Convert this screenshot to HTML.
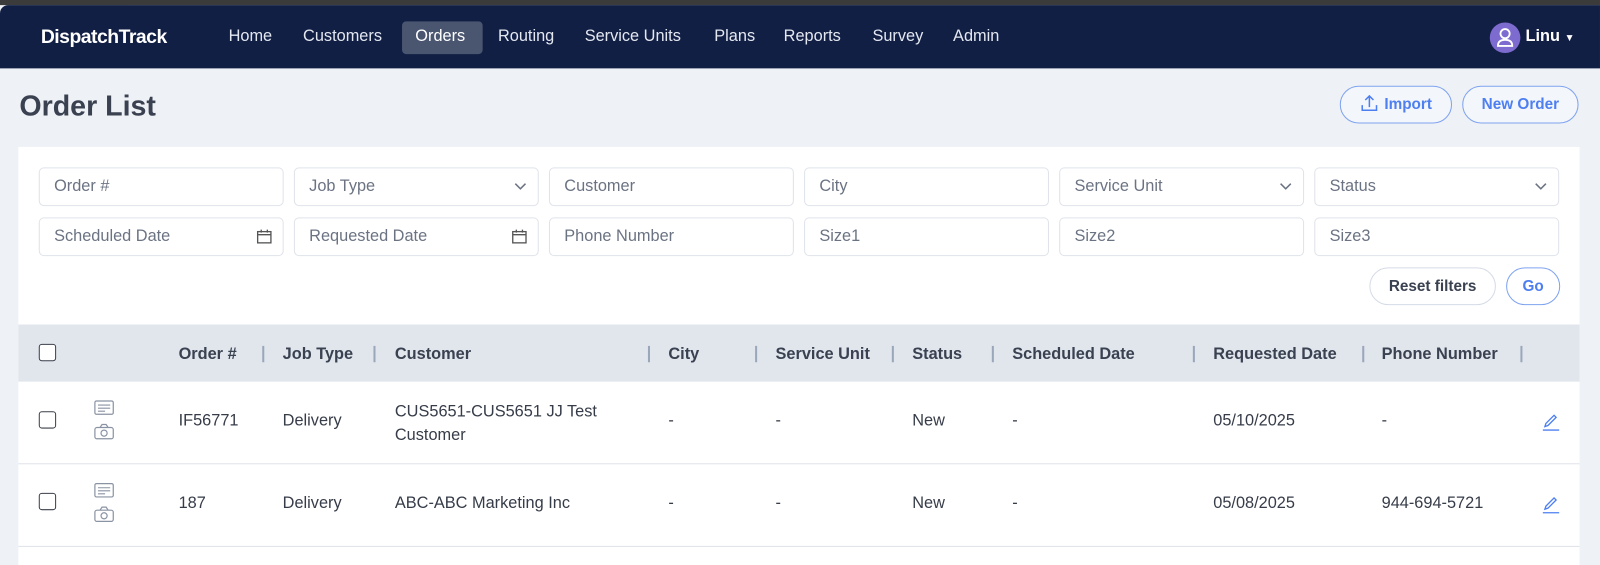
<!DOCTYPE html>
<html><head><style>
*{box-sizing:border-box;margin:0;padding:0}
html,body{width:1600px;height:548px;overflow:hidden;background:#eef1f5}
#w{position:absolute;left:0;top:0;width:1568px;height:537px;transform:scale(1.0204);transform-origin:0 0;font-family:"Liberation Sans",sans-serif;color:#2f3542}
.top{position:absolute;left:0;top:0;width:1568px;height:5px;background:#3b3b3b}
.nav{position:absolute;left:0;top:5px;width:1568px;height:62px;background:#121f45;border-top-left-radius:8px}
.logo{position:absolute;left:40px;top:21px;color:#fff;font-weight:bold;font-size:19px;letter-spacing:-0.5px}
.nl{position:absolute;top:22px;color:#e3e7f0;font-size:16px}
.act{position:absolute;left:394px;top:16px;width:79px;height:32px;background:#4a5570;border-radius:4px}
.av{position:absolute;left:1460px;top:17px;width:30px;height:30px;border-radius:50%;background:#7e6bd0}
h1{position:absolute;left:19px;top:88px;font-size:28px;font-weight:bold;color:#3a4150}
.btn{position:absolute;border:1px solid #7fa3f0;border-radius:19px;color:#4d7ff0;font-weight:bold;font-size:15px;text-align:center;background:#f3f6fb}
.card{position:absolute;left:18px;top:144px;width:1530px;height:410px;background:#fff}
.in{position:absolute;height:38px;width:240px;border:1px solid #dfe3ea;border-radius:5px;color:#6b7383;font-size:16px;padding:9px 14px;background:#fff}
.in svg{position:absolute;right:10px;top:10px}
.th{position:absolute;left:18px;top:318px;width:1530px;height:56px;background:#e1e6ed}
.h{position:absolute;top:339px;font-weight:bold;font-size:16px;color:#3a4150}
.sep{position:absolute;top:339px;width:2px;height:16px;background:#9aa6ba}
.cb{position:absolute;left:38px;width:17px;height:17px;border:1.5px solid #3a3f4a;border-radius:3px;background:#fff}
.c{position:absolute;font-size:16px;color:#363c48}
.rl{position:absolute;left:18px;width:1530px;height:1px;background:#dfe3ea}
</style></head><body><div id="w">
<div class="top"></div>
<div class="nav">
<div class="logo">DispatchTrack</div>
<div class="act"></div>
<div class="nl" style="left:224px">Home</div>
<div class="nl" style="left:297px">Customers</div>
<div class="nl" style="left:407px;color:#fff">Orders</div>
<div class="nl" style="left:488px">Routing</div>
<div class="nl" style="left:573px">Service Units</div>
<div class="nl" style="left:700px">Plans</div>
<div class="nl" style="left:768px">Reports</div>
<div class="nl" style="left:855px">Survey</div>
<div class="nl" style="left:934px">Admin</div>
<div class="av"><svg width="30" height="30"><circle cx="15" cy="11" r="4.5" fill="none" stroke="#fff" stroke-width="1.8"/><path d="M8 23 q0-6 7-6 q7 0 7 6 z" fill="none" stroke="#fff" stroke-width="1.8"/></svg></div>
<div class="nl" style="left:1495px;color:#fff;font-weight:bold">Linu <span style="font-size:10px">▼</span></div>
</div>
<h1>Order List</h1>
<div class="btn" style="left:1313px;top:84px;width:110px;height:37px;line-height:35px"><svg width="18" height="18" style="vertical-align:-3px;margin-right:6px"><path d="M9 13V2M5 6l4-4 4 4M2 11v5h14v-5" fill="none" stroke="#4d7ff0" stroke-width="1.5"/></svg>Import</div>
<div class="btn" style="left:1433px;top:84px;width:114px;height:37px;line-height:35px">New Order</div>
<div class="card"></div>
<div class="in" style="left:38px;top:164px">Order #</div>
<div class="in" style="left:288px;top:164px">Job Type<svg width="14" height="14"><path d="M2 5l5 5 5-5" fill="none" stroke="#6b7383" stroke-width="1.5"/></svg></div>
<div class="in" style="left:538px;top:164px">Customer</div>
<div class="in" style="left:788px;top:164px">City</div>
<div class="in" style="left:1038px;top:164px">Service Unit<svg width="14" height="14"><path d="M2 5l5 5 5-5" fill="none" stroke="#6b7383" stroke-width="1.5"/></svg></div>
<div class="in" style="left:1288px;top:164px">Status<svg width="14" height="14"><path d="M2 5l5 5 5-5" fill="none" stroke="#6b7383" stroke-width="1.5"/></svg></div>
<div class="in" style="left:38px;top:213px">Scheduled Date<svg width="16" height="16"><rect x="1.5" y="3" width="13" height="11" fill="none" stroke="#555" stroke-width="1.3"/><path d="M1.5 6h13M5 1v3M11 1v3" stroke="#555" stroke-width="1.3"/></svg></div>
<div class="in" style="left:288px;top:213px">Requested Date<svg width="16" height="16"><rect x="1.5" y="3" width="13" height="11" fill="none" stroke="#555" stroke-width="1.3"/><path d="M1.5 6h13M5 1v3M11 1v3" stroke="#555" stroke-width="1.3"/></svg></div>
<div class="in" style="left:538px;top:213px">Phone Number</div>
<div class="in" style="left:788px;top:213px">Size1</div>
<div class="in" style="left:1038px;top:213px">Size2</div>
<div class="in" style="left:1288px;top:213px">Size3</div>
<div class="btn" style="left:1342px;top:262px;width:124px;height:37px;line-height:35px;color:#3a4150;border-color:#d5dbe6;background:#fff">Reset filters</div>
<div class="btn" style="left:1476px;top:262px;width:53px;height:37px;line-height:35px;background:#fff">Go</div>
<div class="th"></div>
<div class="cb" style="top:337px"></div>
<div class="h" style="left:175px">Order #</div><div class="sep" style="left:257px"></div>
<div class="h" style="left:277px">Job Type</div><div class="sep" style="left:366px"></div>
<div class="h" style="left:387px">Customer</div><div class="sep" style="left:635px"></div>
<div class="h" style="left:655px">City</div><div class="sep" style="left:740px"></div>
<div class="h" style="left:760px">Service Unit</div><div class="sep" style="left:874px"></div>
<div class="h" style="left:894px">Status</div><div class="sep" style="left:972px"></div>
<div class="h" style="left:992px">Scheduled Date</div><div class="sep" style="left:1169px"></div>
<div class="h" style="left:1189px">Requested Date</div><div class="sep" style="left:1335px"></div>
<div class="h" style="left:1354px">Phone Number</div><div class="sep" style="left:1490px"></div>

<div class="cb" style="top:403px"></div>
<svg style="position:absolute;left:92px;top:392px" width="20" height="40"><rect x="1" y="1" width="18" height="13" rx="1.5" fill="none" stroke="#8a93a3" stroke-width="1.2"/><path d="M4 5h12M4 8h12M4 11h7" stroke="#8a93a3" stroke-width="1.1"/><rect x="1" y="27" width="18" height="11" rx="2" fill="none" stroke="#8a93a3" stroke-width="1.2"/><path d="M6 27l2-3h4l2 3" fill="none" stroke="#8a93a3" stroke-width="1.2"/><circle cx="10" cy="32.5" r="3" fill="none" stroke="#8a93a3" stroke-width="1.2"/></svg>
<div class="c" style="left:175px;top:404px">IF56771</div>
<div class="c" style="left:277px;top:404px">Delivery</div>
<div class="c" style="left:387px;top:392px;line-height:23px">CUS5651-CUS5651 JJ Test<br>Customer</div>
<div class="c" style="left:655px;top:404px">-</div>
<div class="c" style="left:760px;top:404px">-</div>
<div class="c" style="left:894px;top:404px">New</div>
<div class="c" style="left:992px;top:404px">-</div>
<div class="c" style="left:1189px;top:404px">05/10/2025</div>
<div class="c" style="left:1354px;top:404px">-</div>
<svg style="position:absolute;left:1511px;top:405px" width="18" height="18"><path d="M3 13l1-3 8-8 2 2-8 8z" fill="none" stroke="#4d7ff0" stroke-width="1.3"/><path d="M1 16.5h16" stroke="#4d7ff0" stroke-width="1.3"/></svg>
<div class="rl" style="top:454px"></div>

<div class="cb" style="top:483px"></div>
<svg style="position:absolute;left:92px;top:473px" width="20" height="40"><rect x="1" y="1" width="18" height="13" rx="1.5" fill="none" stroke="#8a93a3" stroke-width="1.2"/><path d="M4 5h12M4 8h12M4 11h7" stroke="#8a93a3" stroke-width="1.1"/><rect x="1" y="27" width="18" height="11" rx="2" fill="none" stroke="#8a93a3" stroke-width="1.2"/><path d="M6 27l2-3h4l2 3" fill="none" stroke="#8a93a3" stroke-width="1.2"/><circle cx="10" cy="32.5" r="3" fill="none" stroke="#8a93a3" stroke-width="1.2"/></svg>
<div class="c" style="left:175px;top:485px">187</div>
<div class="c" style="left:277px;top:485px">Delivery</div>
<div class="c" style="left:387px;top:485px">ABC-ABC Marketing Inc</div>
<div class="c" style="left:655px;top:485px">-</div>
<div class="c" style="left:760px;top:485px">-</div>
<div class="c" style="left:894px;top:485px">New</div>
<div class="c" style="left:992px;top:485px">-</div>
<div class="c" style="left:1189px;top:485px">05/08/2025</div>
<div class="c" style="left:1354px;top:485px">944-694-5721</div>
<svg style="position:absolute;left:1511px;top:486px" width="18" height="18"><path d="M3 13l1-3 8-8 2 2-8 8z" fill="none" stroke="#4d7ff0" stroke-width="1.3"/><path d="M1 16.5h16" stroke="#4d7ff0" stroke-width="1.3"/></svg>
<div class="rl" style="top:535px"></div>
</div></body></html>
